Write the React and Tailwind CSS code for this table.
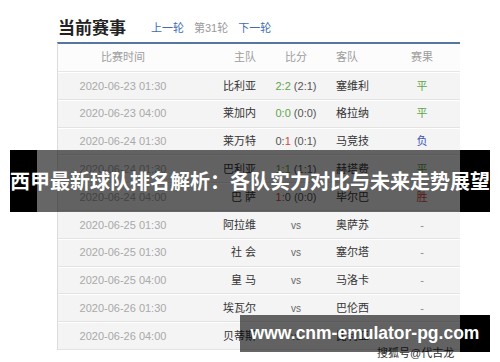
import React from 'react';

const rows = [
    { time: '2020-06-23 01:30', home: '比利亚', score: [['2:2', 'g']], half: '(2:1)', away: '塞维利', res: '平', rc: 'text-[#5fa54a]' },
    { time: '2020-06-23 04:00', home: '莱加内', score: [['0:0', 'g']], half: '(0:0)', away: '格拉纳', res: '平', rc: 'text-[#5fa54a]' },
    { time: '2020-06-24 01:30', home: '莱万特', score: [['0:', 'd'], ['1', 'r']], half: '(0:1)', away: '马竞技', res: '负', rc: 'text-[#3e55b8]' },
    { time: '2020-06-24 01:30', home: '巴利亚', score: [['1:1', 'g']], half: '(1:1)', away: '赫塔费', res: '平', rc: 'text-[#5fa54a]' },
    { time: '2020-06-24 04:00', home: '巴 萨', score: [['1', 'r'], [':0', 'd']], half: '(0:0)', away: '毕尔巴', res: '胜', rc: 'text-[#d4483f]' },
    { time: '2020-06-25 01:30', home: '阿拉维', away: '奥萨苏' },
    { time: '2020-06-25 01:30', home: '社 会', away: '塞尔塔' },
    { time: '2020-06-25 04:00', home: '皇 马', away: '马洛卡' },
    { time: '2020-06-26 01:30', home: '埃瓦尔', away: '巴伦西' },
    { time: '2020-06-26 04:00', home: '贝蒂斯', away: '比利亚' },
];

const tone = { g: 'text-[#5fa54a]', r: 'text-[#d4483f]', d: 'text-[#555]' };
const cols = 'grid grid-cols-[130px_76px_64px_55px_78px] items-center';

function Row({ r }) {
    return (
        <div className={`${cols} h-[27.8px] bg-[#f4f4f4] border-b border-[#e3e3e3] border-t border-t-white`}>
            <span className="text-center text-[#a9a9a9]">{r.time}</span>
            <span className="text-right pr-2 text-[#333] whitespace-pre">{r.home}</span>
            <span className="text-center">
                {r.score ? (
                    <>
                        {r.score.map(([t, c], i) => (
                            <span key={i} className={tone[c]}>{t}</span>
                        ))}
                        <span className="text-[#555]"> {r.half}</span>
                    </>
                ) : (
                    <span className="text-[#666] text-[10px]">vs</span>
                )}
            </span>
            <span className="pl-2 text-[#333]">{r.away}</span>
            <span className={`text-center ${r.res ? r.rc : 'text-[#888]'}`}>{r.res || '-'}</span>
        </div>
    );
}

export default function App() {
    return (
        <div className="relative w-[500px] h-[362px] overflow-hidden bg-white font-['Liberation_Sans','Noto_Sans_CJK_SC',sans-serif]">
            <div className="flex items-center pl-[58px] pt-[14px] h-[42px]">
                <h1 className="text-[17px] leading-[23px] font-bold text-[#222]">当前赛事</h1>
                <div className="flex items-center gap-[10px] ml-[25px] text-[11px] mt-[1px]">
                    <span className="text-[#3f6db3]">上一轮</span>
                    <span className="text-[#9a9a9a]">第31轮</span>
                    <span className="text-[#3f6db3]">下一轮</span>
                </div>
            </div>

            <div className="ml-[57px] w-[403px] border-t-2 border-[#55779f] border-l border-l-[#dcdcdc] text-[11px]">
                <div className={`${cols} h-[28px] bg-[#fcfcfc] border-b border-[#e6e6e6] text-[#9c9c9c]`}>
                    <span className="text-center">比赛时间</span>
                    <span className="text-right pr-2">主队</span>
                    <span className="text-center">比分</span>
                    <span className="pl-2">客队</span>
                    <span className="text-center">赛果</span>
                </div>
                {rows.map((r, i) => (
                    <Row key={i} r={r} />
                ))}
            </div>

            <span className="absolute top-[346px] left-[377px] text-[11px] leading-[14px] text-[#333]">搜狐号@代古龙</span>

            <div className="absolute top-[150px] left-[10px] w-[480px] h-[62px] flex">
                <div className="w-[27px] bg-black" />
                <div className="flex-1 bg-black/60" />
                <div className="w-[30px] bg-black" />
                <div className="absolute inset-0 flex items-center justify-center text-white font-bold text-[20px] whitespace-nowrap font-['Noto_Sans_CJK_SC',sans-serif]">
                    西甲最新球队排名解析：各队实力对比与未来走势展望
                </div>
            </div>

            <div className="absolute top-[315px] left-[240px] w-[250px] h-[37px] flex">
                <div className="flex-1 bg-black/60" />
                <div className="w-[30px] bg-black" />
                <div className="absolute inset-0 flex items-center justify-center text-white font-bold text-[17.5px] whitespace-nowrap">
                    www.cnm-emulator-pg.com
                </div>
            </div>
        </div>
    );
}
